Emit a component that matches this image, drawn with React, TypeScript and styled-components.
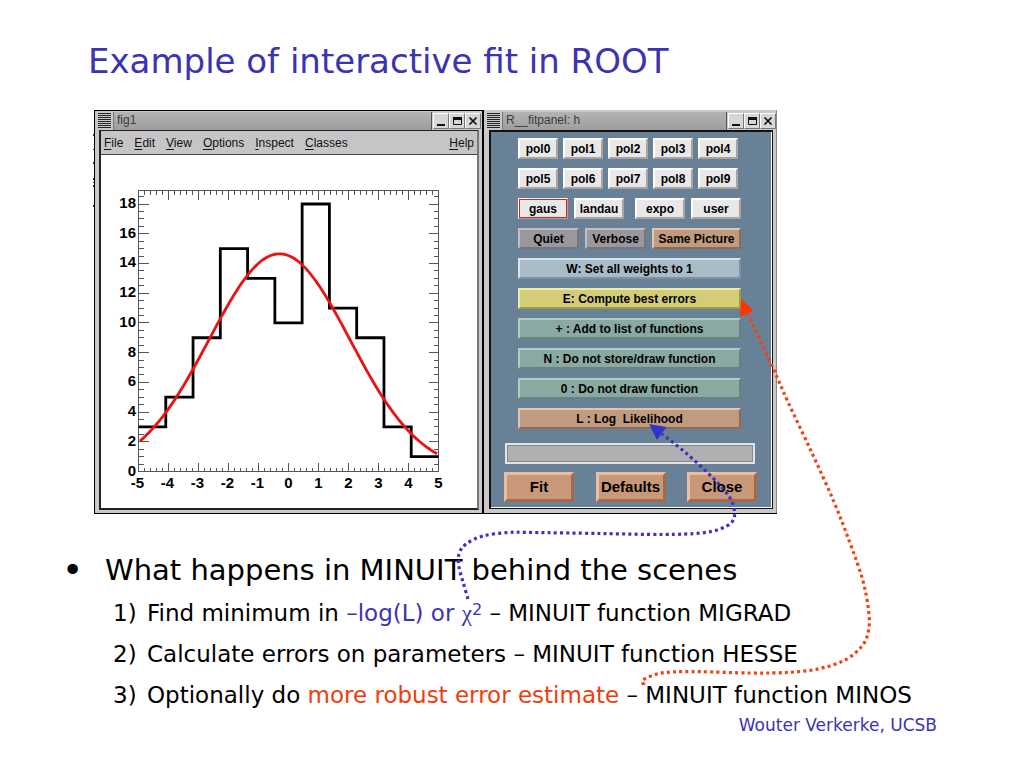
import React from "react";
import styled, { createGlobalStyle } from "styled-components";

const GlobalStyle = createGlobalStyle`
  *, *::before, *::after { box-sizing: border-box; }
  body { margin: 0; background: #fff; }
`;

const slideFont = `Verdana, "DejaVu Sans", sans-serif`;
const uiFont = `"Liberation Sans", Arial, sans-serif`;
const blue = "#3a33b4";
const red = "#f03c0c";

const Slide = styled.main`
  position: relative;
  min-height: 100vh;
  padding: 38px 87px 24px 94px;
  overflow: hidden;
  font-family: ${slideFont};
  color: #000;
`;

const Title = styled.h1`
  margin: 0 0 26px -6px;
  font-size: 34px;
  line-height: 46px;
  font-weight: 400;
  color: ${blue};
`;

const Desktop = styled.section`
  display: flex;
  align-items: stretch;
  font-family: ${uiFont};
`;

const Frame = styled.section<{ $first?: boolean }>`
  display: flex;
  flex-direction: column;
  flex: none;
  width: ${(p) => (p.$first ? 390 : 293)}px;
  background: #c9c9c9;
  border: solid #000;
  border-width: ${(p) => (p.$first ? "1px 2px 1px 1px" : "0 0 1px")};
  padding-top: ${(p) => (p.$first ? 0 : 1)}px;
  box-shadow: ${(p) => (p.$first ? "none" : "inset -1px 0 #8a8a8a")};
`;

const TitleBar = styled.header`
  display: flex;
  height: 19px;
  padding: 1px 1px 0 3px;
`;

const Grip = styled.button`
  width: 13px;
  height: 15px;
  margin: 1px 2px 0 0;
  padding: 0;
  border: 0;
  background: repeating-linear-gradient(#222 0 1px, #c9c9c9 1px 2px);
`;

const Caption = styled.h2`
  flex: 1;
  margin: 0;
  padding-left: 3px;
  border-left: 1px solid #777;
  border-right: 1px solid #555;
  background: linear-gradient(#b4b4b4, #9d9d9d);
  font-size: 12px;
  line-height: 17px;
  font-weight: 400;
  color: #3c3c3c;
`;

const Controls = styled.div`
  display: flex;
  padding: 1px 0 1px 1px;
`;

const Control = styled.button`
  width: 16px;
  height: 16px;
  padding: 0;
  border: 1px solid;
  border-color: #fff #777 #777 #fff;
  background: #d6d6d6;
  svg { display: block; }
`;

const FigBody = styled.div`
  margin: 0 3px 3px 4px;
  border: solid #222;
  border-width: 1px 2px 2px;
  border-right-color: #777;
  background: #fff;
`;

const MenuBar = styled.nav`
  display: flex;
  gap: 11px;
  height: 24px;
  padding: 0 3px;
  background: #c6c4c6;
  border-bottom: 1px solid #444;
`;

const MenuItem = styled.a`
  font-size: 12px;
  line-height: 24px;
  color: #111;
  text-decoration: none;
  &:last-child { margin-left: auto; }
  u { text-underline-offset: 2px; }
`;

const Chart = styled.svg`
  display: block;
  width: 100%;
  font-family: ${uiFont};
`;

const Panel = styled.form`
  display: flex;
  flex-direction: column;
  gap: 9px;
  flex: 1;
  margin: 0 4px 4px 5px;
  padding: 6px 15px 4px 13px;
  border: solid #111;
  border-width: 2px 1px 1px 2px;
  box-shadow: inset -1px -1px #fff;
  background: #698196;
`;

const ButtonRow = styled.div<{ $gap: number; $split?: boolean }>`
  display: flex;
  gap: ${(p) => p.$gap}px;
  padding: 0 16px 0 14px;
  > :nth-child(3) { margin-left: ${(p) => (p.$split ? 5 : 0)}px; }
`;

type Tone = "white" | "grey" | "tan" | "sky" | "yellow" | "green";
const tones: Record<Tone, [string, string, string]> = {
  white: ["#e8e8e8", "#fdfdfd", "#aaa3a0"],
  grey: ["#9b989d", "#c0bfc6", "#77747a"],
  tan: ["#c09b80", "#e4c4ac", "#94694d"],
  sky: ["#a9bbc6", "#d8e4ee", "#7c929e"],
  yellow: ["#d3cd79", "#f0eba8", "#a39b3c"],
  green: ["#8aa9a2", "#b2cbc7", "#65847e"],
};

const Option = styled.button<{ $tone: Tone; $width?: number; $active?: boolean }>`
  flex: ${(p) => (p.$width ? "none" : "1")};
  width: ${(p) => (p.$width ? `${p.$width}px` : "auto")};
  height: 21px;
  padding: 0;
  border: ${(p) => (p.$active ? 1 : 2)}px solid;
  border-color: ${(p) => {
    const [, light, dark] = tones[p.$tone];
    return `${light} ${dark} ${dark} ${light}`;
  }};
  box-shadow: ${(p) => (p.$active ? "inset 0 0 0 1px #dd2020" : "none")};
  background: ${(p) => tones[p.$tone][0]};
  font: bold 12px/16px ${uiFont};
  white-space: pre;
  color: #000;
`;

const Field = styled.input`
  width: 250px;
  height: 21px;
  margin: 5px 0 0 1px;
  border: 2px solid #e2e2ea;
  outline: 1px solid #888;
  outline-offset: -3px;
  background: #b1b0b1;
`;

const Actions = styled.div`
  display: flex;
  justify-content: space-between;
  margin-top: -1px;
`;

const Action = styled.button`
  width: 70px;
  height: 30px;
  padding: 0;
  border: 3px solid;
  border-color: #e8bfa6 #a8684a #a8684a #e8bfa6;
  background: #c89878;
  font: bold 15px/20px ${uiFont};
  color: #000;
`;

const Heading = styled.h2`
  display: flex;
  margin: 36px 0 3px -32px;
  font-size: 29px;
  line-height: 40px;
  font-weight: 400;
`;

const Bullet = styled.span`
  flex: none;
  width: 43px;
  font-size: 36px;
`;

const Steps = styled.ol`
  margin: 0;
  padding: 0 0 0 19px;
  list-style: none;
`;

const Step = styled.li`
  display: flex;
  font-size: 23px;
  line-height: 41px;
  white-space: nowrap;
`;

const StepNumber = styled.span`
  flex: none;
  width: 34px;
`;

const Accent = styled.span<{ $color: string }>`
  color: ${(p) => p.$color};
  i {
    font-family: "Liberation Serif", serif;
    font-style: normal;
  }
  sup {
    font-size: 16px;
    line-height: 0;
    vertical-align: 6px;
  }
`;

const Author = styled.footer`
  font-size: 17px;
  line-height: 18px;
  text-align: right;
  color: ${blue};
`;

const Arrows = styled.svg`
  position: absolute;
  top: 0;
  left: 0;
  pointer-events: none;
`;

function WindowControls() {
  return (
    <Controls>
      <Control aria-label="Minimise">
        <svg width="14" height="14"><path d="M3 11h8" stroke="#111" strokeWidth="2" /></svg>
      </Control>
      <Control aria-label="Maximise">
        <svg width="14" height="14">
          <path d="M3 4.500h9" stroke="#111" strokeWidth="3" />
          <path d="M3.500 5v5.500h8V5" fill="none" stroke="#111" />
        </svg>
      </Control>
      <Control aria-label="Close window">
        <svg width="14" height="14"><path d="M3.500 3.500l7 7M10.500 3.500l-7 7" stroke="#111" strokeWidth="1.7" /></svg>
      </Control>
    </Controls>
  );
}

const bins = [3, 5, 9, 15, 13, 10, 18, 11, 9, 3, 1];
const plot = { left: 37.5, right: 337.5, top: 35.5, bottom: 316.5 };
const sx = (x: number) => plot.left + (x + 5) * 30;
const sy = (y: number) => plot.bottom - y * 14.86;

function Histogram() {
  const step = 10 / bins.length;
  const outline =
    `M${sx(-5)} ${sy(bins[0])}` +
    bins.map((v, i) => `V${sy(v)}H${sx(-5 + step * (i + 1))}`).join("");
  const fit = Array.from({ length: 100 }, (_, i) => {
    const x = -4.95 + i * 0.1;
    const y = 14.65 * Math.exp(-((x + 0.3) ** 2) / 11);
    return `${i ? "L" : "M"}${sx(x)} ${sy(y)}`;
  }).join("");
  const xTicks = Array.from({ length: 51 }, (_, i) => i);
  const yTicks = Array.from({ length: 38 }, (_, i) => i);
  return (
    <Chart viewBox="0 0 376 353" role="img" aria-label="Histogram with Gaussian fit">
      <g stroke="#555" fill="none" shapeRendering="crispEdges">
        <rect x={plot.left} y={plot.top} width="300" height="281" />
        {xTicks.map((i) => {
          const x = plot.left + i * 6;
          const len = i % 5 ? 4 : 9;
          return <path key={i} d={`M${x} ${plot.bottom}v${-len}M${x} ${plot.top}v${len}`} />;
        })}
        {yTicks.map((i) => {
          const y = sy(i / 2);
          const len = i % 4 ? 5 : 10;
          return <path key={i} d={`M${plot.left} ${y}h${len}M${plot.right} ${y}h${-len}`} />;
        })}
      </g>
      <path d={outline} fill="none" stroke="#000" strokeWidth="2.8" />
      <path d={fit} fill="none" stroke="#ec1212" strokeWidth="2.8" />
      <g fontSize="15" fontWeight="bold" fill="#000">
        {Array.from({ length: 10 }, (_, i) => (
          <text key={i} x="35" y={sy(i * 2) + 4} textAnchor="end">{i * 2}</text>
        ))}
        {Array.from({ length: 11 }, (_, i) => (
          <text key={i} x={sx(i - 5) - (i < 5 ? 1 : 0)} y="333" textAnchor="middle">{i - 5}</text>
        ))}
      </g>
    </Chart>
  );
}

type Point = [number, number];

/* Smooth curve that runs through every point (Catmull-Rom as Béziers). */
function curve(points: Point[]) {
  let d = `M${points[0].join(" ")}`;
  for (let i = 0; i < points.length - 1; i++) {
    const p0 = points[Math.max(i - 1, 0)];
    const p1 = points[i];
    const p2 = points[i + 1];
    const p3 = points[Math.min(i + 2, points.length - 1)];
    d += `C${p1[0] + (p2[0] - p0[0]) / 6} ${p1[1] + (p2[1] - p0[1]) / 6} ${p2[0] - (p3[0] - p1[0]) / 6} ${p2[1] - (p3[1] - p1[1]) / 6} ${p2[0]} ${p2[1]}`;
  }
  return d;
}

const bluePoints: Point[] = [
  [468, 599], [463, 582], [459, 567], [459, 554], [466, 544], [483, 536], [508, 532.5],
  [533, 532.5], [600, 533.5], [663, 534.5], [701, 533], [720, 529], [732, 522], [734.5, 512],
  [730, 498], [714, 479], [686, 453], [662, 434],
];
const redPoints: Point[] = [
  [644, 685], [643, 680], [657, 674], [673, 672], [700, 671.7], [750, 673], [790, 672.3],
  [820, 668.5], [845, 660], [862, 646], [868.7, 630], [868.5, 610], [862.7, 580], [850, 543],
  [834, 502], [812, 453], [788, 402], [773, 368], [748, 314],
];

const menus = ["File", "Edit", "View", "Options", "Inspect", "Classes", "Help"];
const wideOptions: [string, Tone][] = [
  ["W: Set all weights to 1", "sky"],
  ["E: Compute best errors", "yellow"],
  ["+ : Add to list of functions", "green"],
  ["N : Do not store/draw function", "green"],
  ["0 : Do not draw function", "green"],
  ["L : Log  Likelihood", "tan"],
];

export default function App() {
  return (
    <>
      <GlobalStyle />
      <Slide>
        <Title>Example of interactive fit in ROOT</Title>
        <Desktop>
          <Frame $first>
            <TitleBar>
              <Grip aria-label="Window menu" />
              <Caption>fig1</Caption>
              <WindowControls />
            </TitleBar>
            <FigBody>
              <MenuBar>
                {menus.map((m) => (
                  <MenuItem key={m} href="#"><u>{m[0]}</u>{m.slice(1)}</MenuItem>
                ))}
              </MenuBar>
              <Histogram />
            </FigBody>
          </Frame>
          <Frame>
            <TitleBar>
              <Grip aria-label="Window menu" />
              <Caption>R__fitpanel: h</Caption>
              <WindowControls />
            </TitleBar>
            <Panel onSubmit={(e) => e.preventDefault()}>
              {[0, 5].map((start) => (
                <ButtonRow key={start} $gap={5}>
                  {[0, 1, 2, 3, 4].map((n) => (
                    <Option key={n} type="button" $tone="white" $width={40}>{`pol${start + n}`}</Option>
                  ))}
                </ButtonRow>
              ))}
              <ButtonRow $gap={6} $split>
                {["gaus", "landau", "expo", "user"].map((n) => (
                  <Option key={n} type="button" $tone="white" $width={50} $active={n === "gaus"}>{n}</Option>
                ))}
              </ButtonRow>
              <ButtonRow $gap={6}>
                <Option type="button" $tone="grey" $width={61}>Quiet</Option>
                <Option type="button" $tone="grey" $width={61}>Verbose</Option>
                <Option type="button" $tone="tan">Same Picture</Option>
              </ButtonRow>
              {wideOptions.map(([label, tone]) => (
                <ButtonRow key={label} $gap={0}>
                  <Option type="button" $tone={tone}>{label}</Option>
                </ButtonRow>
              ))}
              <Field aria-label="Fit options" />
              <Actions>
                <Action type="submit">Fit</Action>
                <Action type="button">Defaults</Action>
                <Action type="button">Close</Action>
              </Actions>
            </Panel>
          </Frame>
        </Desktop>

        <Heading><Bullet>•</Bullet>What happens in MINUIT behind the scenes</Heading>
        <Steps>
          <Step>
            <StepNumber>1)</StepNumber>
            <span>Find minimum in <Accent $color={blue}>–log(L) or <i>χ</i><sup>2</sup></Accent> – MINUIT function MIGRAD</span>
          </Step>
          <Step>
            <StepNumber>2)</StepNumber>
            <span>Calculate errors on parameters – MINUIT function HESSE</span>
          </Step>
          <Step>
            <StepNumber>3)</StepNumber>
            <span>Optionally do <Accent $color={red}>more robust error estimate</Accent> – MINUIT function MINOS</span>
          </Step>
        </Steps>
        <Author>Wouter Verkerke, UCSB</Author>

        <Arrows width="1024" height="768" aria-hidden="true">
          <g fill="none" strokeWidth="3.2" strokeDasharray="3 3.2">
            <path d={curve(bluePoints)} stroke="#3a33c0" />
            <path d={curve(redPoints)} stroke="#f24010" />
          </g>
          <path d="M649 424l17.500 3-9.500 13z" fill="#3333cc" />
          <path d="M741 299l12.500 11.500-13.500 6.500z" fill="#ff3300" />
          <path d="M93.500 134v2M93.500 149v1M93.500 162v2M93.500 178v2M93.500 182v1M93.500 185v2M93.500 205v2" stroke="#333" />
        </Arrows>
      </Slide>
    </>
  );
}
